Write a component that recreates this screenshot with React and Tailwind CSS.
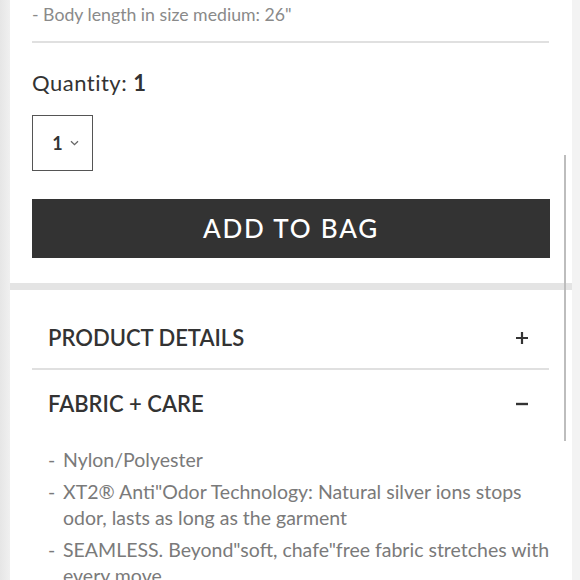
import React from "react";

const font = { fontFamily: "Lato, 'Noto Sans', sans-serif" };

export default function App() {
  return (
    <div className="relative w-[580px] h-[580px] overflow-hidden flex bg-[#f3f3f3]" style={font}>
      <div className="w-[10px] h-full shrink-0 bg-gradient-to-r from-[#e6e6e6] to-[#f0f0f0]" />
      <div className="w-[562px] h-full shrink-0 flex flex-col bg-white">
        <div className="shrink-0 pl-[22px] pr-[22px] pt-[3px] pb-[25px] flex flex-col">
          <div className="text-[17.7px] leading-[24px] text-[#8a8a8a]">- Body length in size medium: 26"</div>
          <div className="mt-[14px] h-[2px] bg-[#e0e0e0] w-[517px]" />
          <div className="mt-[27px] text-[22px] leading-[26px] tracking-[0.5px] text-[#333]">
            Quantity: <span className="font-bold">1</span>
          </div>
          <div className="mt-[19px] w-[61px] h-[56px] border-[1.5px] border-[#555] flex items-center justify-center gap-[7px] pl-[6px]">
            <span className="text-[18px] font-bold text-[#333]">1</span>
            <svg width="9" height="6" viewBox="0 0 9 6" fill="none" stroke="#666" strokeWidth="1.3">
              <path d="M1 1.2 L4.5 4.7 L8 1.2" />
            </svg>
          </div>
          <div className="mt-[28px] w-[518px] h-[59px] bg-[#333333] flex items-center justify-center">
            <span className="text-white text-[26px] tracking-[1.8px] font-medium">ADD TO BAG</span>
          </div>
        </div>
        <div className="shrink-0 h-[7px] bg-[#e4e4e4] w-[570px]" />
        <div className="shrink-0 flex flex-col pl-[22px]">
          <div className="flex items-center justify-between pl-[16px] pr-[20px] pt-[34px] pb-[16px] w-[517px]">
            <span className="text-[22px] leading-[28px] font-semibold text-[#333]">PRODUCT DETAILS</span>
            <svg width="14" height="14" viewBox="0 0 14 14" stroke="#333" strokeWidth="2.2">
              <path d="M7 1 V13 M1 7 H13" />
            </svg>
          </div>
          <div className="h-[2px] bg-[#e0e0e0] w-[517px]" />
          <div className="flex items-center justify-between pl-[16px] pr-[20px] pt-[20px] w-[517px]">
            <span className="text-[22px] leading-[28px] font-semibold text-[#333]">FABRIC + CARE</span>
            <svg width="14" height="14" viewBox="0 0 14 14" stroke="#333" strokeWidth="2.4">
              <path d="M1 7 H13" />
            </svg>
          </div>
          <ul className="mt-[29px] pl-[16px] flex flex-col gap-[6px] text-[19.5px] leading-[26px] text-[#7a7a7a] w-[528px]">
            <li className="flex"><span className="w-[15px] shrink-0">-</span><span>Nylon/Polyester</span></li>
            <li className="flex"><span className="w-[15px] shrink-0">-</span><span>XT2® Anti"Odor Technology: Natural silver ions stops odor, lasts as long as the garment</span></li>
            <li className="flex"><span className="w-[15px] shrink-0">-</span><span>SEAMLESS. Beyond"soft, chafe"free fabric stretches with every move</span></li>
          </ul>
        </div>
      </div>
      <div className="w-[8px] h-full shrink-0 bg-[#f3f3f3]" />
      <div className="absolute left-[564px] top-[155px] w-[2px] h-[286px] bg-[#bdbdbd]" />
    </div>
  );
}
